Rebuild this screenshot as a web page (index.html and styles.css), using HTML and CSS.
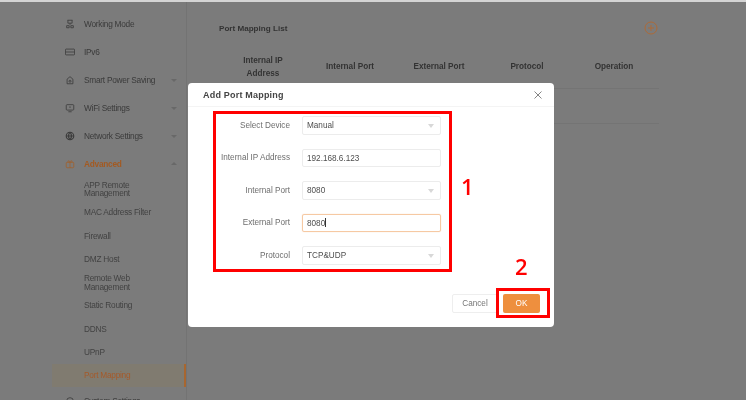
FILE: index.html
```html
<!DOCTYPE html>
<html lang="en">
<head>
    <meta charset="UTF-8">
    <title>Port Mapping</title>
    <link rel="stylesheet" href="styles.css">
</head>
<body>
    <div class="screen">
        <div class="page">
            <nav class="sidebar">
                <div class="nav-item">
                    <svg class="nav-icon" viewBox="0 0 12 12"><path d="M3 1.500h6M3.500 1.500v3.500h5V1.500M6 5v2M2 10.500h3V8H2zM7 10.500h3V8H7z"/></svg>
                    <span class="nav-label">Working Mode</span>
                </div>
                <div class="nav-item">
                    <svg class="nav-icon" viewBox="0 0 12 12"><rect x="0.500" y="2.500" width="11" height="7" rx="1"/><path d="M0.500 6h11"/></svg>
                    <span class="nav-label">IPv6</span>
                </div>
                <div class="nav-item">
                    <svg class="nav-icon" viewBox="0 0 12 12"><path d="M2.500 10.500V5L6 2l3.500 3v5.500z"/><circle cx="6" cy="7.500" r="1.200"/></svg>
                    <span class="nav-label">Smart Power Saving</span>
                    <span class="caret"></span>
                </div>
                <div class="nav-item">
                    <svg class="nav-icon" viewBox="0 0 12 12"><rect x="1.500" y="2" width="9" height="6.500" rx="1"/><path d="M4 10.500h4M6 4v2"/></svg>
                    <span class="nav-label">WiFi Settings</span>
                    <span class="caret"></span>
                </div>
                <div class="nav-item">
                    <svg class="nav-icon nav-icon-bold" viewBox="0 0 12 12"><circle cx="6" cy="6" r="4.500"/><path d="M1.500 6h9M6 1.500c-2.500 3-2.500 6 0 9M6 1.500c2.500 3 2.500 6 0 9"/></svg>
                    <span class="nav-label">Network Settings</span>
                    <span class="caret"></span>
                </div>
                <div class="nav-item nav-open">
                    <svg class="nav-icon" viewBox="0 0 12 12"><rect x="1.500" y="4" width="9" height="6.500" rx="1"/><path d="M6 4v6.500M4 4c-1.500-2 1.500-3 2 0 .5-3 3.500-2 2 0"/></svg>
                    <span class="nav-label">Advanced</span>
                    <span class="caret caret-up"></span>
                </div>
                <div class="sub-list">
                    <a class="sub-item">APP Remote<br>Management</a>
                    <a class="sub-item">MAC Address Filter</a>
                    <a class="sub-item">Firewall</a>
                    <a class="sub-item">DMZ Host</a>
                    <a class="sub-item">Remote Web<br>Management</a>
                    <a class="sub-item">Static Routing</a>
                    <a class="sub-item">DDNS</a>
                    <a class="sub-item">UPnP</a>
                    <a class="sub-item sub-active">Port Mapping</a>
                </div>
                <div class="nav-item">
                    <svg class="nav-icon" viewBox="0 0 12 12"><circle cx="6" cy="6" r="4"/></svg>
                    <span class="nav-label">System Settings</span>
                    <span class="caret"></span>
                </div>
            </nav>
            <main class="content">
                <div class="list-head">
                    <h3>Port Mapping List</h3>
                    <svg class="add-icon" viewBox="0 0 14 14"><circle cx="7" cy="7" r="6"/><path d="M7 4v6M4 7h6"/></svg>
                </div>
                <table class="list-table">
                    <tr>
                        <th class="col-ip">Internal IP<br>Address</th>
                        <th class="col-in">Internal Port</th>
                        <th class="col-ex">External Port</th>
                        <th class="col-pr">Protocol</th>
                        <th class="col-op">Operation</th>
                    </tr>
                    <tr><td colspan="5"></td></tr>
                </table>
            </main>
        </div>

        <div class="modal">
            <div class="modal-head">
                <span class="modal-title">Add Port Mapping</span>
                <svg class="close-icon" viewBox="0 0 8 8"><path d="M.5.500l7 7M7.500.500l-7 7"/></svg>
            </div>
            <form class="modal-form">
                <div class="form-group">
                    <label>Select Device</label>
                    <div class="field">Manual<span class="arrow"></span></div>
                </div>
                <div class="form-group">
                    <label>Internal IP Address</label>
                    <div class="field">192.168.6.123</div>
                </div>
                <div class="form-group">
                    <label>Internal Port</label>
                    <div class="field">8080<span class="arrow"></span></div>
                </div>
                <div class="form-group">
                    <label>External Port</label>
                    <div class="field field-focus">8080<span class="text-cursor"></span></div>
                </div>
                <div class="form-group">
                    <label>Protocol</label>
                    <div class="field">TCP&amp;UDP<span class="arrow"></span></div>
                </div>
            </form>
            <div class="modal-foot">
                <button type="button" class="btn-cancel">Cancel</button>
                <button type="button" class="btn-ok">OK</button>
            </div>
        </div>

        <div class="mark mark-form"></div>
        <div class="mark mark-ok"></div>
        <span class="mark-num num-one">1</span>
        <span class="mark-num num-two">2</span>
    </div>
</body>
</html>
```

FILE: styles.css
```css
body {
    margin: 0;
    font-family: "Liberation Sans", Arial, sans-serif;
    background-color: #7b7b7b;
}
.screen {
    position: relative;
    width: 746px;
    height: 400px;
    overflow: hidden;
    filter: blur(0.4px);
}
.page {
    display: flex;
    height: 398px;
    border-top: 2px solid #d4d4d4;
    background-color: #7b7b7b;
}

/* sidebar */
.sidebar {
    flex: none;
    width: 134px;
    margin-left: 52px;
    border-right: 1px solid #737373;
    color: #3a3a3a;
    font-size: 8.300px;
    letter-spacing: -0.25px;
    padding-top: 8px;
}
.nav-item {
    display: flex;
    align-items: center;
    height: 28px;
    padding-left: 13px;
    padding-right: 9px;
}
.nav-icon {
    flex: none;
    width: 10px;
    height: 10px;
    margin-right: 9px;
    fill: none;
    stroke: #3c3c3c;
    stroke-width: 1;
}
.nav-icon-bold {
    stroke-width: 1.400;
}
.nav-label {
    flex: 1;
}
.caret {
    width: 0;
    height: 0;
    border-left: 3px solid transparent;
    border-right: 3px solid transparent;
    border-top: 3px solid #686868;
}
.caret-up {
    border-top: none;
    border-bottom: 3px solid #686868;
}
.nav-open {
    height: 27.700px;
    color: #a35a22;
    font-weight: bold;
}
.nav-open .nav-icon {
    stroke: #a0612f;
}
.sub-list {
    display: flex;
    flex-direction: column;
}
.sub-item {
    display: flex;
    align-items: center;
    height: 23.300px;
    padding-left: 32px;
    line-height: 8.700px;
    color: #424242;
}
.sub-active {
    color: #a55a2a;
    background-color: #807b70;
    border-right: 2px solid #a8662f;
}

/* list behind the dialog */
.content {
    flex: 1;
    padding: 16px 0 0 32px;
    color: #333;
}
.list-head {
    display: flex;
    align-items: center;
    justify-content: space-between;
    width: 439px;
    height: 20px;
}
.list-head h3 {
    margin: 0;
    font-size: 8.100px;
    font-weight: bold;
}
.add-icon {
    flex: none;
    width: 14px;
    height: 14px;
    fill: none;
    stroke: #ad6a38;
    stroke-width: 1;
}
.list-table {
    width: 440px;
    margin-top: 7px;
    border-collapse: collapse;
    table-layout: fixed;
    font-size: 8.200px;
}
.list-table th {
    height: 43px;
    padding: 0;
    line-height: 13px;
    text-align: center;
    border-bottom: 1px solid #747474;
}
.list-table td {
    height: 32px;
    border-bottom: 1px solid #747474;
}
.col-ip { width: 88px; }
.col-in { width: 86px; }
.col-ex { width: 92px; }
.col-pr { width: 84px; }
.col-op { width: 90px; }

/* dialog */
.modal {
    position: absolute;
    left: 188px;
    top: 83px;
    width: 366px;
    height: 243.500px;
    background-color: #fff;
    border-radius: 4px;
    color: #555;
    font-size: 8.200px;
}
.modal-head {
    display: flex;
    align-items: center;
    justify-content: space-between;
    height: 23px;
    padding: 0 12px 0 15px;
    border-bottom: 1px solid #f4f4f4;
}
.modal-title {
    font-size: 9px;
    font-weight: bold;
    color: #444;
    letter-spacing: 0.2px;
}
.close-icon {
    width: 8px;
    height: 8px;
    fill: none;
    stroke: #777;
    stroke-width: 0.900;
}
.modal-form {
    display: flex;
    flex-direction: column;
    gap: 14px;
    padding-top: 9px;
}
.form-group {
    display: flex;
    align-items: center;
}
.form-group label {
    width: 102px;
    text-align: right;
    color: #6e6e6e;
}
.field {
    position: relative;
    width: 139px;
    height: 18.500px;
    margin-left: 12px;
    padding-left: 4px;
    box-sizing: border-box;
    border: 1px solid #ececec;
    border-radius: 2px;
    line-height: 17px;
    color: #4e4e4e;
}
.field-focus {
    border-color: #f6c9a3;
    box-shadow: 0 0 1px #f6c9a3;
}
.text-cursor {
    display: inline-block;
    width: 1px;
    height: 9px;
    vertical-align: -1px;
    background-color: #333;
}
.arrow {
    position: absolute;
    right: 6px;
    top: 7px;
    border-left: 3px solid transparent;
    border-right: 3px solid transparent;
    border-top: 4px solid #d8d8d8;
}
.modal-foot {
    display: flex;
    justify-content: flex-end;
    gap: 5px;
    margin-top: 29px;
    padding-right: 14px;
}
.modal-foot button {
    height: 19px;
    padding: 0;
    border-radius: 2px;
    font-family: inherit;
    font-size: 8.200px;
    cursor: pointer;
}
.btn-cancel {
    width: 46px;
    background-color: #fff;
    border: 1px solid #eeeeee;
    color: #777;
}
.btn-ok {
    width: 37px;
    background-color: #ee8f3e;
    border: none;
    color: #fff;
}

/* red annotations on top of the screenshot */
.mark {
    position: absolute;
    box-sizing: border-box;
    border: 3.500px solid #ff0000;
}
.mark-form {
    left: 213px;
    top: 111px;
    width: 239px;
    height: 161px;
}
.mark-ok {
    left: 495.500px;
    top: 288px;
    width: 54px;
    height: 30px;
}
.mark-num {
    position: absolute;
    font-family: "Open Sans", sans-serif;
    font-size: 22px;
    font-weight: 600;
    line-height: 22px;
    color: #ff0000;
}
.num-one {
    left: 461px;
    top: 175px;
}
.num-two {
    left: 515px;
    top: 255px;
}
```
